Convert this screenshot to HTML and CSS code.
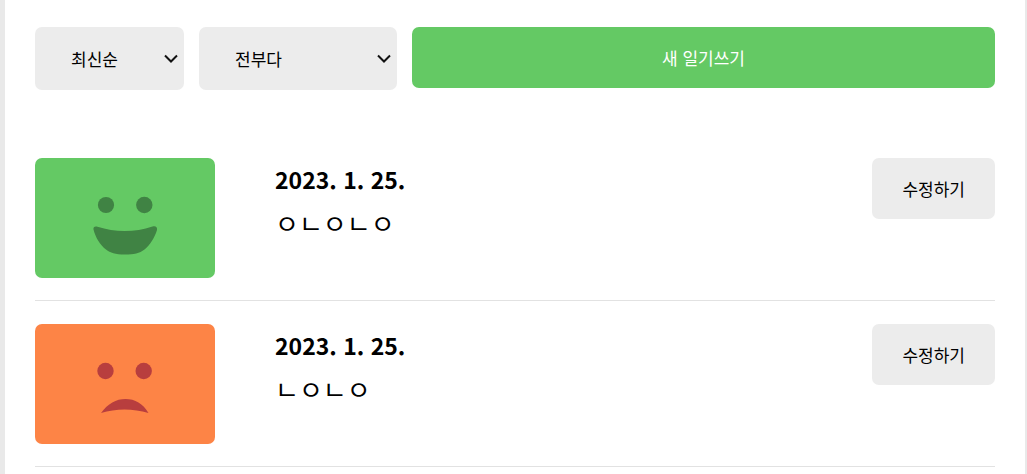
FILE: index.html
```html
<!DOCTYPE html>
<html lang="ko">
<head>
<meta charset="utf-8">
<meta name="viewport" content="width=device-width, initial-scale=1">
<title>일기장</title>
<link rel="stylesheet" href="styles.css">
</head>
<body>
<main class="diary">
  <div class="toolbar">
    <div class="filter filter-order">
      <select class="control select" aria-label="정렬">
        <option>최신순</option>
      </select>
      <svg class="chevron" viewBox="0 0 14 10" aria-hidden="true"><path d="M1 1.500L7 7.500L13 1.500"/></svg>
    </div>
    <div class="filter filter-emotion">
      <select class="control select" aria-label="감정">
        <option>전부다</option>
      </select>
      <svg class="chevron" viewBox="0 0 14 10" aria-hidden="true"><path d="M1 1.500L7 7.500L13 1.500"/></svg>
    </div>
    <button class="control create" type="button">새 일기쓰기</button>
  </div>
  <article class="entry">
    <div class="emotion emotion-good">
      <svg class="face" viewBox="0 0 180 120" role="img" aria-label="좋음">
        <circle cx="71" cy="47" r="8.1"/>
        <circle cx="109.300" cy="47" r="8.200"/>
        <path d="M58.500 71.500C58 69 60 68 62.500 68.800C80 74.500 100 74.500 117.500 68.500C120.500 67.500 122.600 69 122 72C119.500 80 115 87 109.500 91.500C104.500 95.500 99 96.500 90 96.500C80 96.500 75.500 95 71 91.500C65 87 60.500 79.500 58.500 71.500Z"/>
      </svg>
    </div>
    <div class="summary">
      <h2 class="date">2023. 1. 25.</h2>
      <p class="content">ㅇㄴㅇㄴㅇ</p>
    </div>
    <button class="control edit" type="button">수정하기</button>
  </article>
  <article class="entry">
    <div class="emotion emotion-bad">
      <svg class="face" viewBox="0 0 180 120" role="img" aria-label="나쁨">
        <circle cx="70.500" cy="47" r="8.200"/>
        <circle cx="108.700" cy="47" r="8.200"/>
        <path d="M66 89C73 79.500 81 75 90.500 75C100 75 108 79.500 113.500 89C98 84.200 81 84.200 66 89Z"/>
      </svg>
    </div>
    <div class="summary">
      <h2 class="date">2023. 1. 25.</h2>
      <p class="content">ㄴㅇㄴㅇ</p>
    </div>
    <button class="control edit" type="button">수정하기</button>
  </article>
</main>
</body>
</html>
```

FILE: styles.css
```css
* {
  box-sizing: border-box;
}

body {
  margin: 0;
  background: #e9e9e9;
  color: #000;
  font-family: "Nanum Pen Script", "Noto Sans CJK KR", sans-serif;
}

.diary {
  min-height: 100vh;
  margin: 0 2px 0 5px;
  padding: 27px 30px 0;
  background: #fff;
}

.toolbar {
  display: flex;
  align-items: flex-start;
  gap: 15px;
  margin-bottom: 45px;
}

.control {
  height: 61px;
  border: 0;
  border-radius: 7px;
  background: #ececec;
  color: #000;
  font-family: inherit;
  font-size: 17px;
  cursor: pointer;
}

/* The select and its chevron share one grid cell. */
.filter {
  display: grid;
  align-items: center;
}

.filter-order {
  width: 149px;
}

.filter-emotion {
  width: 198px;
}

.select {
  grid-area: 1 / 1;
  width: 100%;
  height: 63px;
  padding: 0 36px;
  appearance: none;
}

.chevron {
  grid-area: 1 / 1;
  justify-self: end;
  width: 14px;
  height: 10px;
  margin-right: 6px;
  fill: none;
  stroke: #111;
  stroke-width: 2;
  pointer-events: none;
}

.create {
  flex: 1;
  background: #64c964;
  color: #fff;
}

.entry {
  display: flex;
  align-items: flex-start;
  padding: 23px 0 22px;
  border-bottom: 1px solid #e2e2e2;
}

.emotion {
  width: 180px;
  border-radius: 7px;
  overflow: hidden;
}

.face {
  display: block;
  width: 100%;
}

.emotion-good {
  background: #64c964;
  fill: #408344;
}

.emotion-bad {
  background: #fd8446;
  fill: #b83e3e;
}

.summary {
  flex: 1;
  padding: 3px 0 0 60px;
}

.date {
  margin: 0;
  font-size: 23px;
  line-height: 36px;
}

.content {
  margin: 8px 0 0;
  font-size: 26px;
  line-height: 36px;
}

.edit {
  padding: 0 30px;
}
```
